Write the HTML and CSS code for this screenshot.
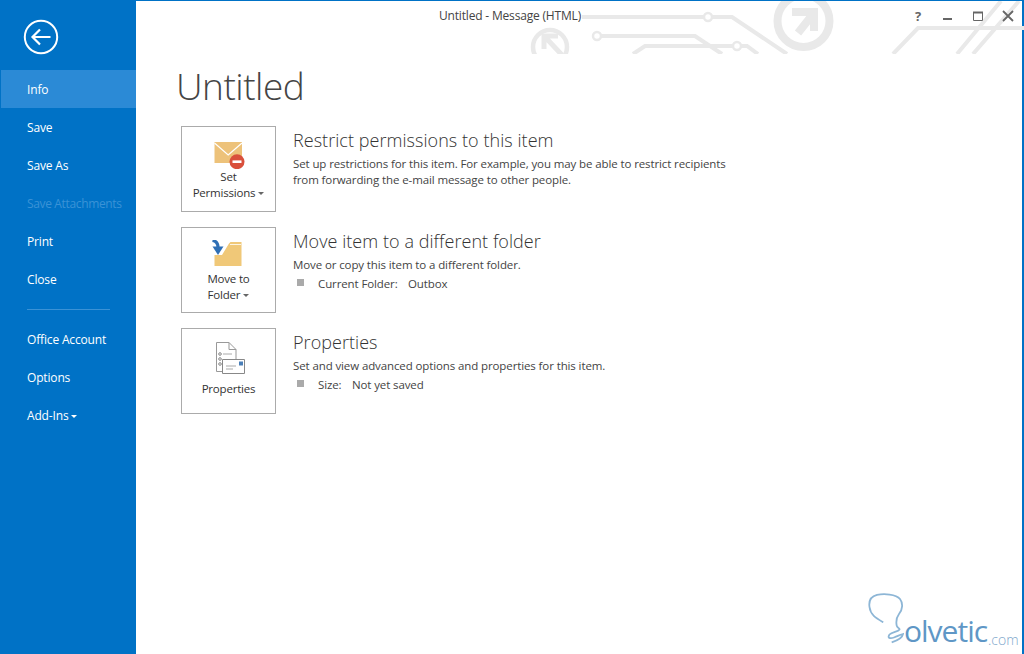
FILE: index.html
```html
<!DOCTYPE html>
<html lang="en">
<head>
<meta charset="utf-8">
<title>Untitled - Message (HTML)</title>
<link rel="stylesheet" href="styles.css">
</head>
<body>
<div class="app">
  <nav class="side">
    <button class="back" aria-label="Back">
      <svg width="36" height="36" viewBox="0 0 36 36"><circle cx="18" cy="18" r="16.200" fill="none" stroke="#fff" stroke-width="2"/><path d="M10 18H27.500M17 10.500L9.500 18L17 25.500" fill="none" stroke="#fff" stroke-width="2.200"/></svg>
    </button>
    <ul class="menu">
      <li class="item active">Info</li>
      <li class="item">Save</li>
      <li class="item">Save As</li>
      <li class="item disabled">Save Attachments</li>
      <li class="item">Print</li>
      <li class="item">Close</li>
      <li class="sep"></li>
      <li class="item">Office Account</li>
      <li class="item">Options</li>
      <li class="item">Add-Ins<span class="caret light"></span></li>
    </ul>
  </nav>
  <main class="content">
    <header class="titlebar">
      <svg class="deco" width="504" height="53" viewBox="520 0 504 53" fill="none" stroke="#e9e9e9" stroke-width="4">
        <circle cx="550" cy="46" r="17" stroke-width="4.500"/>
        <path d="M544 48V35H558M546 37L562 54" stroke-width="5"/>
        <path d="M582 16H732L787 53"/>
        <circle cx="708" cy="16" r="4" fill="#fff" stroke-width="2.500"/>
        <path d="M600 35H695L722 53"/>
        <circle cx="597" cy="35" r="4" fill="#fff" stroke-width="2.500"/>
        <path d="M633 53L645 45H747L758 53"/>
        <circle cx="737" cy="45" r="4" fill="#fff" stroke-width="2.500"/>
        <circle cx="803.500" cy="20" r="26" stroke-width="8"/>
        <path d="M798 32L813 13M792 11H814V30" stroke-width="8"/>
        <path d="M893 53L918 27H1024M957 53L1001 0M973 53L1019 0"/>
      </svg>
      <div class="wintitle">Untitled - Message (HTML)</div>
      <div class="winbtns">
        <span class="help">?</span>
        <svg width="12" height="12" viewBox="0 0 12 12"><path d="M1 9H10" stroke="#666" stroke-width="2"/></svg>
        <svg width="12" height="12" viewBox="0 0 12 12"><path d="M1.500 2.500H10.500V10.500H1.500Z" fill="none" stroke="#666"/><path d="M1 2.500H11" stroke="#666" stroke-width="2"/></svg>
        <svg width="12" height="12" viewBox="0 0 12 12"><path d="M1 1L11 11M11 1L1 11" stroke="#666" stroke-width="1.800"/></svg>
      </div>
    </header>
    <h1 class="doc-title">Untitled</h1>
    <section class="row">
      <button class="tile">
        <svg class="ico" width="34" height="30" viewBox="0 0 34 30">
          <path d="M2.500 3H30V24H2.500Z" fill="#edc27a"/>
          <path d="M2.500 4L16.200 16L30 4" fill="none" stroke="#fff" stroke-width="1.200"/>
          <circle cx="25" cy="22.700" r="7.500" fill="#d9503c"/>
          <path d="M20.500 22.700H29.500" stroke="#fff" stroke-width="2.600"/>
        </svg>
        <span class="tile-label">Set<br>Permissions<span class="caret"></span></span>
      </button>
      <div class="info">
        <h2>Restrict permissions to this item</h2>
        <p>Set up restrictions for this item. For example, you may be able to restrict recipients<br>from forwarding the e-mail message to other people.</p>
      </div>
    </section>
    <section class="row">
      <button class="tile">
        <svg class="ico ico-folder" width="34" height="31" viewBox="0 0 34 31">
          <path d="M2.500 26V15H10L17 3.500L18.500 2H29.500V26Z" fill="#f0c878"/>
          <path d="M18 4.500H29" stroke="#fff" stroke-width="0.800" fill="none"/>
          <path d="M0.500 0.500C4 1 6 3 6 7.500" fill="none" stroke="#2f6fb5" stroke-width="3.200"/>
          <path d="M0.500 6.500H11.500L6 15Z" fill="#2f6fb5"/>
        </svg>
        <span class="tile-label">Move to<br>Folder<span class="caret"></span></span>
      </button>
      <div class="info">
        <h2>Move item to a different folder</h2>
        <p>Move or copy this item to a different folder.</p>
        <div class="bullet"><span class="sq"></span><span class="key">Current Folder:</span><span>Outbox</span></div>
      </div>
    </section>
    <section class="row">
      <button class="tile">
        <svg class="ico" width="34" height="34" viewBox="0 0 34 34">
          <path d="M4.500 1.500H17L24 8.500V30.500H4.500Z" fill="#fff" stroke="#999"/>
          <path d="M17 1.500V8.500H24" fill="none" stroke="#999"/>
          <circle cx="8" cy="13" r="1.300" fill="none" stroke="#888"/>
          <circle cx="8" cy="18" r="1.300" fill="none" stroke="#888"/>
          <circle cx="8" cy="23" r="1.300" fill="none" stroke="#888"/>
          <path d="M11 13H20" stroke="#aaa"/>
          <path d="M10.500 18.500H32.500V32.500H10.500Z" fill="#fff" stroke="#888"/>
          <path d="M27 20.500H31V24.500H27Z" fill="#4a7fb8"/>
          <path d="M14 25H24M14 28H21" stroke="#aaa"/>
        </svg>
        <span class="tile-label single">Properties</span>
      </button>
      <div class="info">
        <h2>Properties</h2>
        <p>Set and view advanced options and properties for this item.</p>
        <div class="bullet"><span class="sq"></span><span class="key short">Size:</span><span>Not yet saved</span></div>
      </div>
    </section>
    <div class="logo">
      <svg class="bulb" width="38" height="52" viewBox="0 0 38 52" fill="none" stroke="#8db6d6" stroke-width="1.800">
        <path d="M15.300 29.300C8 25 2.500 22 1.500 14C.5 7 4 3 9 1.800C16 .5 28 1 32 6C35 10 35 16 31 21C28 25 28 29 28.700 32.700C29 35 32 35 31.500 36.500C30 39 24 38.500 21.500 41.500C19 45 22 46 26 44.500C30 43 33 41.500 35 41C34.500 44 31 47 23.700 49.300"/>
      </svg>
      <span class="brand">olvetic</span><span class="tld">.com</span>
    </div>
  </main>
</div>
</body>
</html>
```
FILE: styles.css
```css
* { box-sizing: border-box; }
html, body { margin: 0; padding: 0; height: 100%; }
body { font-family: "Open Sans", "Noto Sans", sans-serif; background: #fff; color: #444; overflow: hidden; }
.app { display: flex; width: 1024px; height: 654px; border-top: 1px solid #0072c6; border-right: 2px solid #0072c6; }
.side { width: 136px; flex: none; background: #0072c6; color: #fff; margin-top: -1px; }
.back { display: block; margin: 19px 0 0 23px; padding: 0; width: 36px; height: 36px; background: none; border: 0; }
.menu { list-style: none; margin: 15px 0 0 1px; padding: 0; }
.item { height: 38px; padding-left: 26px; font-size: 12px; line-height: 40px; letter-spacing: -0.16px; white-space: nowrap; }
.item.active { background: #2b8ad6; }
.item.disabled { color: #3a92d6; letter-spacing: -0.35px; }
.sep { height: 1px; margin: 11px 26px 10px; width: 83px; background: #3a92d6; }
.caret { display: inline-block; margin-left: 3px; vertical-align: middle; border: 3px solid transparent; border-top-color: #666; border-bottom: 0; }
.caret.light { border-top-color: #fff; }
.content { flex: 1; position: relative; padding-left: 40px; min-width: 0; }
.titlebar { height: 52px; display: block; }
.deco { position: absolute; left: 384px; top: 0; }
.wintitle { position: absolute; left: 303px; top: 7px; font-size: 12px; line-height: 16px; color: #444; letter-spacing: -0.18px; white-space: nowrap; }
.winbtns { position: absolute; right: 8px; top: 9px; display: flex; gap: 18px; align-items: center; }
.help { font: bold 13px/12px "Open Sans", sans-serif; color: #666; width: 12px; text-align: center; }
.doc-title { margin: 8px 0 0; font-size: 37px; font-weight: 300; line-height: 50px; color: #444; letter-spacing: -0.5px; }
.row { display: flex; margin: 15px 0 0 5px; height: 86px; }
.tile { width: 95px; height: 86px; flex: none; background: #fff; border: 1px solid #ababab; padding: 0; display: flex; flex-direction: column; align-items: center; position: relative; font-family: inherit; color: #333; }
.ico { margin-top: 12px; flex: none; }
.tile-label { font-size: 11.500px; line-height: 16px; text-align: center; letter-spacing: -0.2px; margin-top: 0; }
.tile-label.single { margin-top: 6px; }
.info { margin-left: 17px; }
.info h2 { margin: 0; font-size: 18px; font-weight: 300; line-height: 28px; color: #333; letter-spacing: 0.05px; white-space: nowrap; }
.info p { margin: 2px 0 0; font-size: 11.500px; line-height: 16px; letter-spacing: -0.11px; white-space: nowrap; }
.bullet { display: flex; align-items: center; height: 21px; font-size: 11.500px; letter-spacing: -0.11px; white-space: nowrap; }
.sq { width: 7px; height: 7px; background: #aaa; margin: -3px 14px 0 4px; flex: none; }
.key { width: 90px; }
.key.short { width: 34px; }
.logo { position: absolute; right: 0; bottom: 0; width: 156px; height: 62px; }
.bulb { position: absolute; left: 2px; top: 1px; }
.brand { position: absolute; left: 38px; top: 21px; font-family: "Open Sans", sans-serif; font-size: 30px; line-height: 36px; color: #5f97c6; letter-spacing: -1px; }
.tld { position: absolute; left: 122px; top: 39px; font-size: 14px; line-height: 18px; font-weight: 300; color: #7fa8cc; }
```
